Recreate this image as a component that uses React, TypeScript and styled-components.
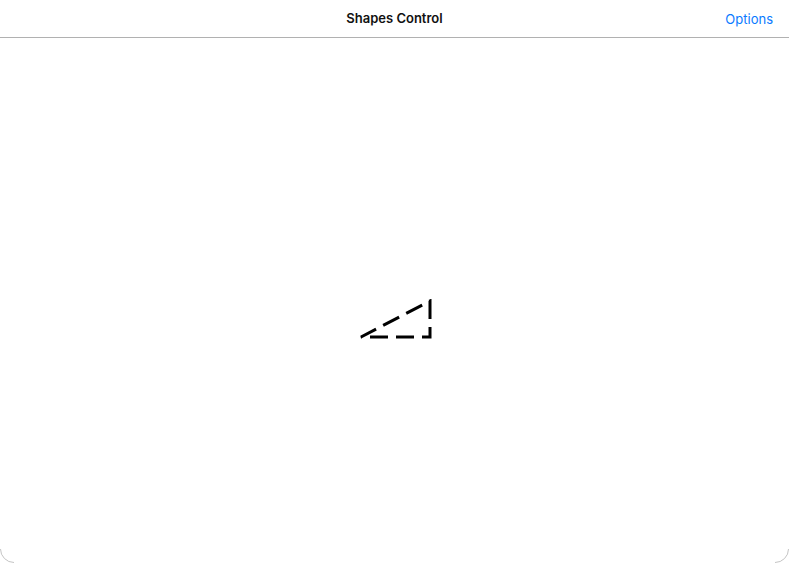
import React from "react";
import styled, { createGlobalStyle } from "styled-components";

const GlobalStyle = createGlobalStyle`
  html, body {
    margin: 0;
    padding: 0;
    background: #ffffff;
  }
  body {
    font-family: Inter, "Noto Sans", sans-serif;
  }
`;

const Screen = styled.div`
  position: relative;
  width: 789px;
  height: 563px;
  display: flex;
  flex-direction: column;
  background: #ffffff;
  overflow: hidden;
`;

const NavBar = styled.div`
  height: 37px;
  flex-shrink: 0;
  display: grid;
  grid-template-columns: 1fr auto 1fr;
  align-items: center;
  border-bottom: 1px solid #b1b1b1;
  padding: 0 16px;
`;

const Title = styled.div`
  grid-column: 2;
  font-size: 13px;
  font-weight: 600;
  color: #111111;
  padding-bottom: 2px;
`;

const NavButton = styled.button`
  justify-self: end;
  border: none;
  background: none;
  padding: 0;
  font-family: inherit;
  font-size: 13px;
  color: #0a7aff;
`;

const Canvas = styled.div`
  flex: 1;
  display: flex;
  align-items: center;
  justify-content: center;
`;

const ShapeWrap = styled.div`
  margin-left: 5px;
  margin-top: 39px;
  line-height: 0;
`;

const Corner = styled.svg<{ $side: "left" | "right" }>`
  position: absolute;
  bottom: 0;
  ${(p) => (p.$side === "left" ? "left: 0;" : "right: 0;")}
`;

function DashedTriangle() {
  // path starts at top-right, runs down, along the bottom, then closes diagonally
  return (
    <svg width="76" height="42" viewBox="0 0 76 42">
      <path
        d="M71 2 L71 38 L2 38 Z"
        fill="none"
        stroke="#000"
        strokeWidth="3"
        strokeDasharray="18 8"
        strokeLinejoin="miter"
      />
    </svg>
  );
}

export default function App() {
  return (
    <>
      <GlobalStyle />
      <Screen>
        <NavBar>
          <Title>Shapes Control</Title>
          <NavButton>Options</NavButton>
        </NavBar>
        <Canvas>
          <ShapeWrap>
            <DashedTriangle />
          </ShapeWrap>
        </Canvas>
        <Corner $side="left" width="14" height="14" viewBox="0 0 14 14">
          <path d="M0.5 0 A13.5 13.5 0 0 0 14 13.5" fill="none" stroke="#c4c4c4" strokeWidth="1" />
        </Corner>
        <Corner $side="right" width="14" height="14" viewBox="0 0 14 14">
          <path d="M13.5 0 A13.5 13.5 0 0 1 0 13.5" fill="none" stroke="#c4c4c4" strokeWidth="1" />
        </Corner>
      </Screen>
    </>
  );
}
